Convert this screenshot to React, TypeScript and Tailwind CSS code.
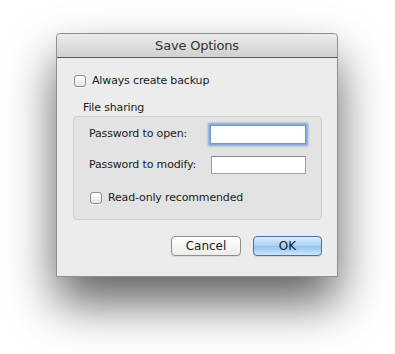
import React from 'react';

const font = { fontFamily: '"DejaVu Sans", "Lucida Grande", sans-serif' };

function Check({ label }: { label: string }) {
  return (
    <label className="flex items-center gap-[6px] text-[11px] tracking-[-0.15px] text-[#1a1a1a]">
      <span className="block w-[12px] h-[12px] rounded-[3px] border border-[#8c8c8c] bg-gradient-to-b from-white to-[#e6e6e6] shadow-[0_1px_0_rgba(255,255,255,0.6)]" />
      <span>{label}</span>
    </label>
  );
}

export default function App() {
  return (
    <div className="min-h-screen bg-white pt-[33px] pl-[56px]" style={font}>
      <div className="w-[282px] bg-[#ececec] border border-[#8f8f8f] rounded-t-[4px] shadow-[0_26px_48px_rgba(0,0,0,0.62)]">
        {/* Title bar */}
        <div className="h-[24px] flex items-center justify-center rounded-t-[4px] bg-gradient-to-b from-[#ebebeb] to-[#d0d0d0] border-b border-[#575757] text-[13px] tracking-[-0.2px] text-[#333]">
          Save Options
        </div>

        <div className="pt-[15px] pb-[20px] pl-[16px] pr-[15px]">
          <div className="h-[16px] flex items-center pl-[1px]">
            <Check label="Always create backup" />
          </div>

          <div className="mt-[12px] pl-[10px] h-[14px] leading-[14px] text-[11px] tracking-[-0.15px] text-[#1a1a1a]">File sharing</div>

          <div className="mt-[1px] rounded-[4px] border border-[#cfcfcf] bg-[#e3e3e3] pt-[8px] pb-[14px] pl-[15px] pr-[15px] text-[11px] tracking-[-0.15px]">
            <div className="flex items-center justify-between h-[19px]">
              <span className="text-[#1a1a1a]">Password to open:</span>
              <span className="block w-[96px] h-[19px] bg-white border border-[#6f9ad0] shadow-[0_0_2px_2px_rgba(96,146,210,0.75)]" />
            </div>
            <div className="flex items-center justify-between h-[18px] mt-[12px]">
              <span className="text-[#1a1a1a]">Password to modify:</span>
              <span className="block w-[95px] h-[18px] bg-white border border-[#9d9d9d] border-t-[#8a8a8a]" />
            </div>
            <div className="h-[14px] flex items-center mt-[17px] pl-[1px]">
              <Check label="Read-only recommended" />
            </div>
          </div>

          <div className="flex justify-end gap-[12px] mt-[16px]">
            <button className="w-[70px] h-[20px] rounded-[4px] border border-[#8e8e8e] bg-gradient-to-b from-white to-[#ececec] text-[12px] text-[#1a1a1a] shadow-[0_1px_0_rgba(0,0,0,0.08)]">
              Cancel
            </button>
            <button className="w-[69px] h-[20px] rounded-[4px] border border-[#4f6f9c] bg-[linear-gradient(to_bottom,#dcecfb_0%,#a9d1f6_50%,#93c3f1_51%,#cbe6fd_100%)] text-[12px] text-[#1a1a1a] shadow-[0_1px_0_rgba(0,0,0,0.1)]">
              OK
            </button>
          </div>
        </div>
      </div>
    </div>
  );
}
